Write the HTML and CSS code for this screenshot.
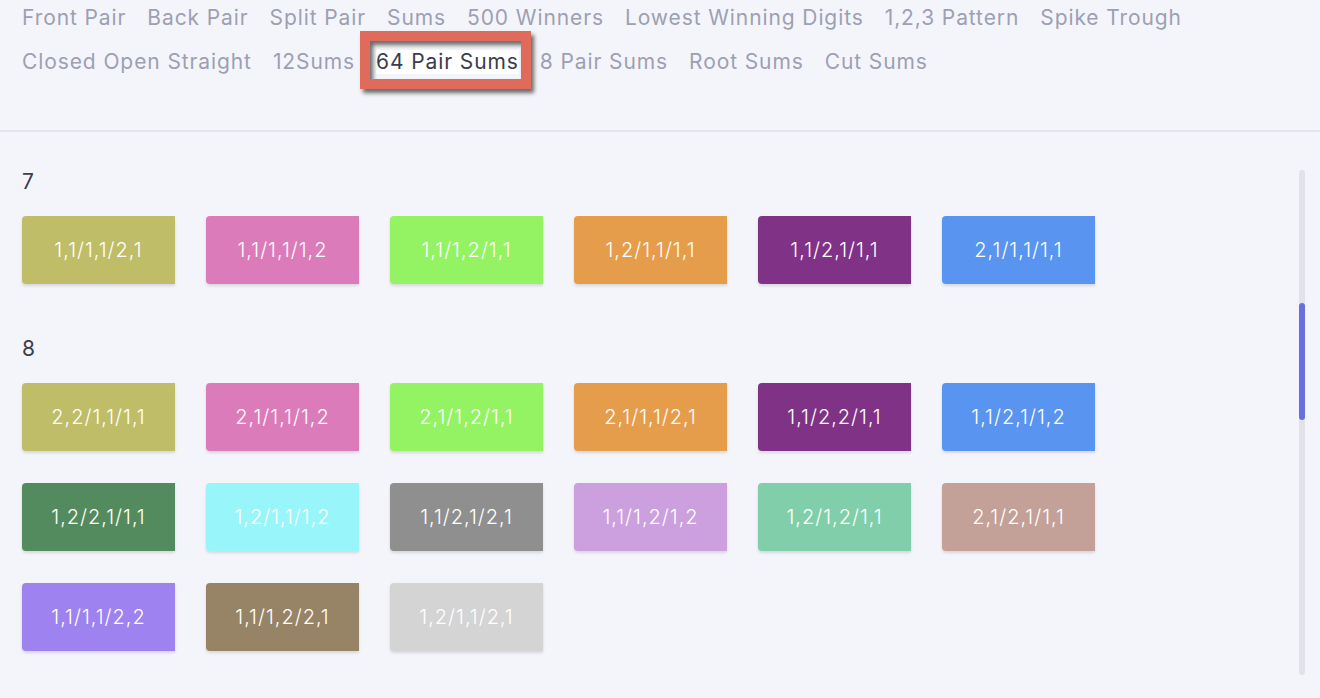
FILE: index.html
```html
<!DOCTYPE html>
<html>
<head>
<meta charset="utf-8">
<link rel="stylesheet" href="styles.css">
</head>
<body>
<div class="page">
  <nav class="tabs">
    <span class="tab">Front Pair</span>
    <span class="tab">Back Pair</span>
    <span class="tab">Split Pair</span>
    <span class="tab">Sums</span>
    <span class="tab">500 Winners</span>
    <span class="tab">Lowest Winning Digits</span>
    <span class="tab">1,2,3 Pattern</span>
    <span class="tab">Spike Trough</span>
    <span class="tab">Closed Open Straight</span>
    <span class="tab">12Sums</span>
    <span class="tab active">64 Pair Sums</span>
    <span class="tab">8 Pair Sums</span>
    <span class="tab">Root Sums</span>
    <span class="tab">Cut Sums</span>
  </nav>
  <div class="divider"></div>
  <div class="body">
    <div class="content">
      <section class="group">
        <h2 class="group-title">7</h2>
        <div class="grid">
          <div class="tile c-olive">1,1/1,1/2,1</div>
          <div class="tile c-pink">1,1/1,1/1,2</div>
          <div class="tile c-lime">1,1/1,2/1,1</div>
          <div class="tile c-orange">1,2/1,1/1,1</div>
          <div class="tile c-purple">1,1/2,1/1,1</div>
          <div class="tile c-blue">2,1/1,1/1,1</div>
        </div>
      </section>
      <section class="group">
        <h2 class="group-title">8</h2>
        <div class="grid">
          <div class="tile c-olive">2,2/1,1/1,1</div>
          <div class="tile c-pink">2,1/1,1/1,2</div>
          <div class="tile c-lime">2,1/1,2/1,1</div>
          <div class="tile c-orange">2,1/1,1/2,1</div>
          <div class="tile c-purple">1,1/2,2/1,1</div>
          <div class="tile c-blue">1,1/2,1/1,2</div>
          <div class="tile c-green">1,2/2,1/1,1</div>
          <div class="tile c-cyan">1,2/1,1/1,2</div>
          <div class="tile c-gray">1,1/2,1/2,1</div>
          <div class="tile c-lilac">1,1/1,2/1,2</div>
          <div class="tile c-mint">1,2/1,2/1,1</div>
          <div class="tile c-rose">2,1/2,1/1,1</div>
          <div class="tile c-violet">1,1/1,1/2,2</div>
          <div class="tile c-brown">1,1/1,2/2,1</div>
          <div class="tile c-silver">1,2/1,1/2,1</div>
        </div>
      </section>
    </div>
    <div class="scrollbar"><div class="thumb"></div></div>
  </div>
</div>
</body>
</html>
```
FILE: styles.css
```css
html, body {
  margin: 0;
  padding: 0;
  background: #f4f5fa;
}
body {
  font-family: "Inter", "Open Sans", sans-serif;
  width: 1320px;
  height: 698px;
  overflow: hidden;
}
.page {
  display: flex;
  flex-direction: column;
}
.tabs {
  display: flex;
  flex-wrap: wrap;
  column-gap: 21px;
  row-gap: 20px;
  padding: 6px 22px 0 22px;
  height: 130px;
  box-sizing: border-box;
  align-content: flex-start;
}
.tab {
  font-size: 21px;
  line-height: 24px;
  color: #9d9fb3;
  font-weight: 400;
  white-space: nowrap;
  letter-spacing: 0.9px;
}
.tab.active {
  color: #3b3c4a;
  background: #ffffff;
  position: relative;
}
.tab.active::before {
  content: "";
  position: absolute;
  left: -16px;
  right: -12px;
  top: -19px;
  bottom: -15px;
  border: 10px solid #e06b5b;
  box-shadow: 3px 4px 4px rgba(30, 30, 30, 0.65), inset 3px 4px 4px rgba(30, 30, 30, 0.65);
}
.divider {
  height: 2px;
  background: #e4e5ec;
}
.body {
  display: flex;
  padding-top: 38px;
}
.content {
  flex: 1;
  padding-left: 22px;
}
.group {
  margin-bottom: 53px;
}
.group-title {
  margin: 0 0 22px 0;
  font-size: 21px;
  line-height: 24px;
  font-weight: 400;
  color: #3d3d4b;
}
.grid {
  display: grid;
  grid-template-columns: repeat(6, 153px);
  column-gap: 31px;
  row-gap: 32px;
}
.tile {
  height: 68px;
  display: flex;
  align-items: center;
  justify-content: center;
  color: #ffffff;
  font-size: 20px;
  font-weight: 300;
  letter-spacing: 1px;
  border-radius: 4px 0 0 4px;
  box-shadow: 0 2px 3px rgba(0, 0, 0, 0.12);
}
.c-olive { background: #c0bd68; }
.c-pink { background: #dc7bba; }
.c-lime { background: #93f363; }
.c-orange { background: #e59d4b; }
.c-purple { background: #803286; }
.c-blue { background: #5894f0; }
.c-green { background: #548b5e; }
.c-cyan { background: #98f6fa; }
.c-gray { background: #8f8f8f; }
.c-lilac { background: #cca0de; }
.c-mint { background: #81ceaa; }
.c-rose { background: #c4a198; }
.c-violet { background: #9e82f0; }
.c-brown { background: #978365; }
.c-silver { background: #d4d4d4; }
.scrollbar {
  width: 6px;
  height: 505px;
  margin-right: 15px;
  background: #e2e3ea;
  border-radius: 3px;
  padding-top: 133px;
  box-sizing: border-box;
}
.thumb {
  height: 117px;
  background: #6870e0;
  border-radius: 3px;
}
```
